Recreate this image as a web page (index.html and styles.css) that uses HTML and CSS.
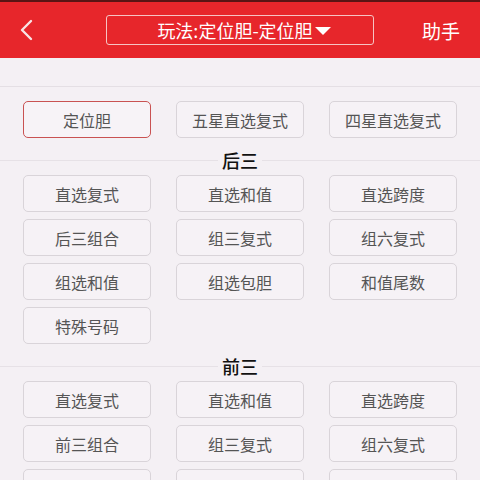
FILE: index.html
```html
<!DOCTYPE html>
<html lang="zh">
<head>
<meta charset="utf-8">
<link rel="stylesheet" href="styles.css">
</head>
<body>
<div class="statusbar"></div>
<header class="topbar">
  <div class="back">
    <svg width="16" height="22" viewBox="0 0 16 22"><path d="M12 2 L3 11 L12 20" fill="none" stroke="#f8e4e4" stroke-width="2.4" stroke-linecap="round" stroke-linejoin="round"/></svg>
  </div>
  <div class="title">
    <span>玩法:定位胆-定位胆</span>
    <svg class="caret" width="16" height="10" viewBox="0 0 16 10"><path d="M0 1 L16 1 L8 9 Z" fill="#fff"/></svg>
  </div>
  <div class="helper">助手</div>
</header>
<div class="spacer"></div>
<main class="content">
  <div class="grid first">
    <div class="btn active">定位胆</div>
    <div class="btn">五星直选复式</div>
    <div class="btn">四星直选复式</div>
  </div>
  <div class="label"><span>后三</span></div>
  <div class="grid">
    <div class="btn">直选复式</div>
    <div class="btn">直选和值</div>
    <div class="btn">直选跨度</div>
    <div class="btn">后三组合</div>
    <div class="btn">组三复式</div>
    <div class="btn">组六复式</div>
    <div class="btn">组选和值</div>
    <div class="btn">组选包胆</div>
    <div class="btn">和值尾数</div>
    <div class="btn">特殊号码</div>
  </div>
  <div class="label"><span>前三</span></div>
  <div class="grid">
    <div class="btn">直选复式</div>
    <div class="btn">直选和值</div>
    <div class="btn">直选跨度</div>
    <div class="btn">前三组合</div>
    <div class="btn">组三复式</div>
    <div class="btn">组六复式</div>
    <div class="btn">组选和值</div>
    <div class="btn">组选包胆</div>
    <div class="btn">和值尾数</div>
  </div>
</main>
</body>
</html>
```
FILE: styles.css
```css
html, body {
  margin: 0;
  padding: 0;
  background: #f4f0f4;
  font-family: "Noto Sans CJK SC", "Noto Sans", sans-serif;
  overflow: hidden;
  height: 480px;
}
.statusbar {
  height: 2px;
  background: #5a1414;
}
.topbar {
  height: 56px;
  background: #e7262b;
  display: flex;
  align-items: center;
  position: relative;
}
.back {
  width: 106px;
  padding-left: 19px;
  box-sizing: border-box;
  display: flex;
  align-items: center;
  height: 56px;
}
.title {
  width: 268px;
  height: 30px;
  box-sizing: border-box;
  border: 1.5px solid #f6c4c4;
  border-radius: 3px;
  display: flex;
  align-items: center;
  justify-content: center;
  color: #fff;
  font-size: 18px;
  gap: 2px;
  padding-left: 8px;
}
.title span { line-height: 1; }
.caret { margin-top: 1px; }
.helper {
  flex: 1;
  color: #fff;
  font-size: 19px;
  text-align: right;
  padding-right: 20px;
  line-height: 1;
}
.spacer {
  height: 28px;
  border-bottom: 1px solid #e4dfe4;
}
.content {
  padding: 14px 23px 0;
}
.grid {
  display: grid;
  grid-template-columns: repeat(3, 128px);
  column-gap: 25px;
  row-gap: 7px;
}
.btn {
  height: 37px;
  box-sizing: border-box;
  border: 1px solid #d9d4d9;
  border-radius: 5px;
  background: #f6f2f6;
  color: #555;
  font-size: 16px;
  display: flex;
  align-items: center;
  justify-content: center;
}
.btn.active {
  border: 1.5px solid #c95252;
  background: #f7f3f7;
}
.label {
  position: relative;
  margin: 11px -23px 4px;
  height: 22px;
  display: flex;
  justify-content: center;
  align-items: center;
}
.label::before {
  content: "";
  position: absolute;
  left: 0;
  right: 0;
  top: 11px;
  border-top: 1px solid #e6e1e6;
}
.label span {
  position: relative;
  background: #f4f0f4;
  padding: 0 4px;
  font-size: 18px;
  font-weight: 500;
  color: #111;
  line-height: 22px;
}
```
